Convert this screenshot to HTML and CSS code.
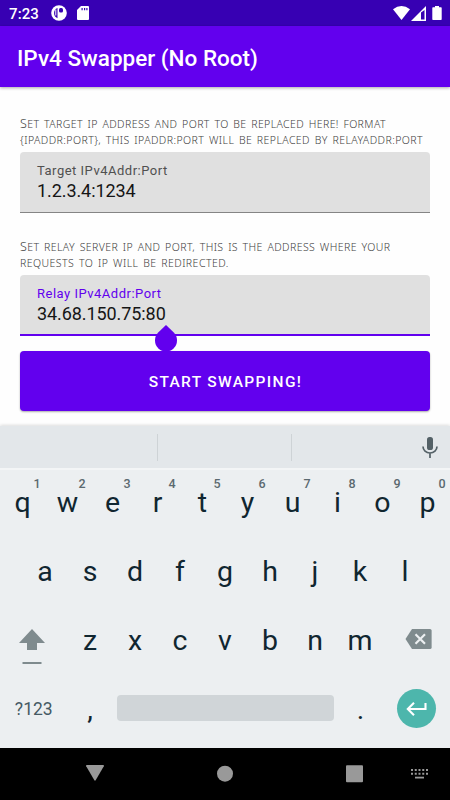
FILE: index.html
```html
<!DOCTYPE html>
<html lang="en">
<head>
<meta charset="utf-8">
<title>IPv4 Swapper</title>
<link rel="stylesheet" href="styles.css">
</head>
<body>
<div class="status">
  <span class="clock">7:23</span>
  <svg class="st-app" width="16" height="16" viewBox="0 0 16 16"><circle cx="8" cy="8" r="7.800" fill="#fff"/><path d="M6.500 3a5.500 5.500 0 0 0 0 10.200z" fill="#3700b3"/><path d="M4.300 4.500h1v6h-1z" fill="#fff"/><rect x="8" y="3" width="4" height="4.500" rx="1.500" fill="#3700b3"/></svg>
  <svg class="st-sd" width="12" height="14" viewBox="0 0 12 14"><path d="M4 0h7q1 0 1 1v12q0 1-1 1H1q-1 0-1-1V4z" fill="#fff"/><path d="M4.500 2h1.200v2.300H4.500zM7 2h1.200v2.300H7zM9.300 2h1.200v2.300H9.300z" fill="#3700b3"/></svg>
  <svg class="st-wifi" width="17" height="14" viewBox="0 0 17 14"><path d="M0 3.200Q8.500-3.200 17 3.200L8.500 14z" fill="#fff"/></svg>
  <svg class="st-cell" width="15" height="15" viewBox="0 0 15 15"><path d="M0 15L15 0v15z" fill="#fff"/><path d="M10 6.500l3.500-2.500v9.500H10z" fill="#3700b3"/></svg>
  <svg class="st-bat" width="10" height="14" viewBox="0 0 10 14"><path d="M3 0h4v1.300h2q.7 0 .7.7v11.200q0 .8-.7.8H1q-.7 0-.7-.8V2q0-.7.7-.7h2z" fill="#fff"/></svg>
</div>
<header class="appbar"><h1>IPv4 Swapper (No Root)</h1></header>
<main class="content">
  <p class="hint"><span class="line l1"><span class="cap">S</span>et target ip address and port to be replaced here! format</span><span class="line l2">{ipaddr:port}, this ipaddr:port will be replaced by relayaddr:port</span></p>
  <div class="field"><label>Target IPv4Addr:Port</label><div class="value">1.2.3.4:1234</div></div>
  <p class="hint second"><span class="line l3"><span class="cap">S</span>et relay server ip and port, this is the address where your</span><span class="line l4">requests to ip will be redirected.</span></p>
  <div class="field focused"><label>Relay IPv4Addr:Port</label><div class="value">34.68.150.75:80</div>
    <svg class="handle" width="22" height="27" viewBox="0 0 22 27"><path d="M11 0l7.800 7.600a11 11 0 1 1-15.600 0z" fill="#6200ee"/></svg>
  </div>
  <button class="start">START SWAPPING!</button>
</main>
<section class="keyboard">
  <div class="strip"><i></i><i></i><span><svg width="16" height="21" viewBox="0 0 16 21"><rect x="5" y="0" width="6" height="13" rx="2.600" fill="#546167"/><path d="M1 9.500a7 6.500 0 0 0 14 0M8 16v5" fill="none" stroke="#546167" stroke-width="1.700"/></svg></span></div>
  <div class="row"><b>q<sup>1</sup></b><b>w<sup>2</sup></b><b>e<sup>3</sup></b><b>r<sup>4</sup></b><b>t<sup>5</sup></b><b>y<sup>6</sup></b><b>u<sup>7</sup></b><b>i<sup>8</sup></b><b>o<sup>9</sup></b><b>p<sup>0</sup></b></div>
  <div class="row mid"><b>a</b><b>s</b><b>d</b><b>f</b><b>g</b><b>h</b><b>j</b><b>k</b><b>l</b></div>
  <div class="row">
    <span class="shift"><svg width="26" height="36" viewBox="0 0 26 36"><path d="M13 0l13 14h-8v7H8v-7H0z" fill="#7f8b8e"/><path d="M3.500 33h19v2h-19z" fill="#7f8b8e"/></svg></span>
    <b>z</b><b>x</b><b>c</b><b>v</b><b>b</b><b>n</b><b>m</b>
    <span class="del"><svg width="27" height="20" viewBox="0 0 27 20"><path d="M7 0h18q1.600 0 1.600 1.600v16.800q0 1.600-1.600 1.600H7L.5 10z" fill="#7f8b8e"/><path d="M10.500 5.300l9.500 9.500M20 5.300l-9.500 9.500" stroke="#eceff1" stroke-width="2.200"/></svg></span>
  </div>
  <div class="row last">
    <span class="sym">?123</span><b>,</b><span class="space"></span><b>.</b>
    <span class="enter"><svg width="21" height="14" viewBox="0 0 21 14"><path d="M19.500 1v6H2M8 .8L1.800 7 8 13.200" fill="none" stroke="#fff" stroke-width="2.100"/></svg></span>
  </div>
</section>
<nav class="nav">
  <svg width="450" height="53" viewBox="0 0 450 53" fill="#999"><path d="M87 18h16q1.500 0 .8 1.300l-8 13.800q-.8 1.300-1.600 0l-8-13.800Q85.500 18 87 18z"/><circle cx="225" cy="26.700" r="8"/><rect x="346" y="18.300" width="17" height="17" rx="1"/><path d="M411 23h17M411 26.700h17" stroke="#999" stroke-width="2" stroke-dasharray="2 1.750"/><path d="M415 29.700h9v1.800h-9z"/></svg>
</nav>
</body>
</html>
```
FILE: styles.css
```css
* { box-sizing: border-box; }
body { margin: 0; width: 450px; height: 800px; display: flex; flex-direction: column; overflow: hidden; background: #fefefe; font-family: Roboto, sans-serif; }
svg { display: block; flex: none; }
.status { height: 26px; flex: none; background: #3700b3; color: #fff; display: flex; align-items: center; padding: 0 8px 0 9px; }
.clock { width: 42px; font-size: 15px; font-weight: 500; letter-spacing: .1px; line-height: 26px; padding-top: 1px; }
.st-sd { margin-left: 10px; }
.st-wifi { margin-left: auto; }
.st-cell { margin-left: 1px; }
.st-bat { margin-left: 6px; }
.appbar { height: 61px; flex: none; background: #6200ee; color: #fff; box-shadow: 0 1px 3px #0005; padding-left: 17px; }
h1 { margin: 0; font-size: 22.5px; font-weight: 500; line-height: 64px; white-space: nowrap; }
.content { flex: none; height: 339px; padding: 29px 20px 0; }
.hint { margin: 0; height: 36px; font-family: "Noto Sans", sans-serif; font-weight: 300; font-size: 10.5px; color: #404040; text-transform: uppercase; word-spacing: 1.5px; }
.line { display: block; height: 16px; line-height: 16px; white-space: nowrap; }
.cap { font-size: 12.5px; line-height: 1; }
.l1 { letter-spacing: .4px; }
.l2 { letter-spacing: .43px; }
.l3 { letter-spacing: .41px; }
.l4 { letter-spacing: .46px; }
.field { position: relative; height: 61px; background: #e0e0e0; border-radius: 4px 4px 0 0; border-bottom: 1px solid #858585; padding: 10px 17px 0; }
.second { margin-top: 26px; }
.field label { display: block; font-size: 13px; line-height: 18px; letter-spacing: .5px; color: #505050; }
.value { font-size: 18px; line-height: 22px; letter-spacing: -.08px; color: #151515; }
.focused { border-bottom: 2px solid #6200ee; }
.focused label { color: #6200ee; }
.handle { position: absolute; left: 135px; top: 50px; }
.start { display: block; margin-top: 15px; width: 410px; height: 60px; border: 0; border-radius: 4px; background: #6200ee; color: #fff; font: 500 15.5px/62px Roboto, sans-serif; padding: 0 0 0 1px; letter-spacing: 1.35px; box-shadow: 0 1px 2px #0005; }
.keyboard { height: 322px; flex: none; background: #eceff1; color: #102630; box-shadow: 0 -1px 3px #0002; }
.strip { height: 44px; background: #e3e7ea; border-bottom: 2px solid #f3f5f6; display: flex; align-items: center; }
.strip i { width: 1px; height: 27px; margin-left: 157px; background: #ced3d6; }
.strip i + i { margin-left: 133px; }
.strip span { margin: 0 12px 0 auto; }
.row { height: 69px; display: flex; }
.row b { position: relative; width: 45px; font-size: 28.5px; font-weight: 400; line-height: 66px; text-align: center; }
sup { position: absolute; right: 4.5px; top: 6px; font-size: 12.5px; font-weight: 500; line-height: 15px; color: #5b696f; }
.mid { padding-left: 22.5px; }
.shift { width: 67.5px; padding: 21px 0 0 19px; }
.del { padding: 21px 0 0 22.5px; }
.sym { width: 67.5px; font-size: 17.5px; line-height: 64px; text-align: center; color: #455a64; }
.space { width: 217px; height: 26px; margin: 18px 4px 0 4.5px; border-radius: 4px; background: #d0d5d8; }
.enter { width: 39px; height: 39px; margin: 12px 0 0 14px; border-radius: 50%; background: #4db6ac; display: flex; align-items: center; justify-content: center; }
.nav { height: 52px; flex: none; background: #000; }
.nav svg { margin-top: -1px; }
```
